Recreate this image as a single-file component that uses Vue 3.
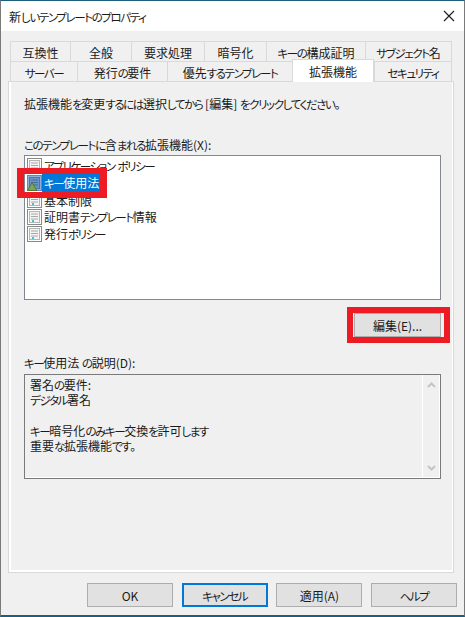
<script setup>
import { h } from 'vue'

// kana in the original UI font is much narrower than in Noto, so kana runs get their own span
const Txt = (props) =>
  props.t.split(/([\u3040-\u30ff]+)/).filter(Boolean).map((s) =>
    /[\u3040-\u30ff]/.test(s) ? h('span', { class: 'kana' }, s) : s
  )
Txt.props = ['t']

const topTabs = [
  { label: '互換性', w: 60 },
  { label: '全般', w: 61 },
  { label: '要求処理', w: 73 },
  { label: '暗号化', w: 62 },
  { label: 'キーの構成証明', w: 99 },
  { label: 'サブジェクト名', w: 87 }
]
const bottomTabs = [
  { label: 'サーバー', w: 67 },
  { label: '発行の要件', w: 90 },
  { label: '優先するテンプレート', w: 125 },
  { label: '拡張機能', w: 82, active: true },
  { label: 'セキュリティ', w: 78 }
]
const extensions = [
  { label: 'アプリケーション ポリシー' },
  { label: 'キー使用法', selected: true },
  { label: '基本制限' },
  { label: '証明書テンプレート情報' },
  { label: '発行ポリシー' }
]
const description = ['署名の要件:', 'デジタル署名', '', 'キー暗号化のみキー交換を許可します', '重要な拡張機能です。']
const footer = ['OK', 'キャンセル', '適用(A)', 'ヘルプ']
</script>

<template>
  <div class="window">
    <div class="titlebar">
      <span class="title"><Txt t="新しいテンプレートのプロパティ" /></span>
      <svg class="close" width="12" height="12" viewBox="0 0 12 12">
        <path d="M1 1 L11 11 M11 1 L1 11" stroke="#1a1a1a" stroke-width="1.1" fill="none" />
      </svg>
    </div>

    <div class="body">
      <div class="tabs">
        <div class="tab-row">
          <div v-for="t in topTabs" :key="t.label" class="tab" :style="{ width: t.w + 'px' }"><span><Txt :t="t.label" /></span></div>
        </div>
        <div class="tab-row">
          <div
            v-for="t in bottomTabs"
            :key="t.label"
            class="tab"
            :class="{ active: t.active }"
            :style="{ width: t.w + 'px' }"
          ><span><Txt :t="t.label" /></span></div>
        </div>
      </div>

      <div class="panel">
        <p class="hint"><Txt t="拡張機能を変更するには選択してから [編集] をクリックしてください。" /></p>
        <p class="label list-label"><Txt t="このテンプレートに含まれる拡張機能(X):" /></p>

        <div class="listbox">
          <div v-for="e in extensions" :key="e.label" class="item" :class="{ selected: e.selected }">
            <svg class="doc" width="15" height="16" viewBox="0 0 15 16">
              <rect x="0.5" y="0.5" width="14" height="15" :fill="e.selected ? '#8fb0d8' : '#fff'" :stroke="e.selected ? '#5f88bb' : '#8a8a8a'" />
              <rect x="2.5" y="2.5" width="10" height="11" :fill="e.selected ? '#6f93c4' : '#f4f4f4'" :stroke="e.selected ? '#4a78a8' : '#b5b5b5'" />
              <path d="M4 5h7M4 7.5h7M4 10h7" :stroke="e.selected ? '#3f6ea3' : '#a8a8a8'" />
              <rect v-if="!e.selected" x="5" y="11" width="2" height="2" fill="#35c6d8" />
              <path v-if="e.selected" d="M5 7.5 L10 15.5 H0.5 Z" fill="#7da44f" stroke="#4d6e30" stroke-width="0.8" />
            </svg>
            <span class="item-text"><Txt :t="e.label" /></span>
          </div>
          <div class="mark mark-list"></div>
        </div>

        <div class="edit-row">
          <button class="btn edit-btn">編集(E)...</button>
          <div class="mark mark-edit"></div>
        </div>

        <p class="label desc-label"><Txt t="キー使用法 の説明(D):" /></p>
        <div class="descbox">
          <div class="desc-text">
            <div v-for="(line, i) in description" :key="i" class="desc-line"><Txt :t="line" /></div>
          </div>
          <div class="scroll">
            <svg width="9" height="6" viewBox="0 0 9 6"><path d="M1 5 L4.5 1.5 L8 5" stroke="#c4c4c4" stroke-width="2" fill="none" /></svg>
            <svg width="9" height="6" viewBox="0 0 9 6"><path d="M1 1 L4.5 4.5 L8 1" stroke="#c4c4c4" stroke-width="2" fill="none" /></svg>
          </div>
        </div>
      </div>

      <div class="footer">
        <button v-for="b in footer" :key="b" class="btn foot-btn" :class="{ primary: b === 'キャンセル' }"><Txt :t="b" /></button>
      </div>
    </div>
  </div>
</template>

<style scoped>
.window {
  width: 465px;
  height: 617px;
  box-sizing: border-box;
  display: flex;
  flex-direction: column;
  background: #f0f0f0;
  border-top: 1px solid #1c5f7c;
  border-bottom: 2px solid #1c5f7c;
  border-left: 1px solid #7a7a7a;
  border-right: 1px solid #7a7a7a;
  font-family: "Noto Sans CJK JP", "Noto Sans", sans-serif;
  font-feature-settings: "palt";
  font-size: 12px;
  color: #1a1a1a;
}
.titlebar {
  height: 30px;
  flex: none;
  background: #fff;
  display: flex;
  align-items: center;
  justify-content: space-between;
  padding: 0 9px 0 8px;
}
.body {
  flex: 1;
  display: flex;
  flex-direction: column;
  padding: 10px 9px 0 7px;
}
.tabs {
  display: flex;
  flex-direction: column;
  padding-left: 2px;
  height: 40px;
  flex: none;
}
.tab-row {
  display: flex;
  height: 20px;
}
.tab {
  box-sizing: border-box;
  height: 21px;
  border: 1px solid #d9d9d9;
  border-right: none;
  border-bottom: none;
  display: flex;
  align-items: center;
  justify-content: center;
  background: #f0f0f0;
}
.tab:last-child {
  border-right: 1px solid #d9d9d9;
}
.tab.active {
  position: relative;
  z-index: 2;
  background: #fff;
  height: 23px;
  margin-top: -2px;
  border-right: 1px solid #d9d9d9;
}
.panel {
  position: relative;
  box-sizing: border-box;
  width: 446px;
  height: 492px;
  background: #f0f0f0;
  border: 1px solid #d9d9d9;
  box-shadow: inset 2px 0 0 #fff, inset -1px -2px 0 #fff;
  padding: 14px 12px 0 15px;
  flex: none;
}
.hint, .label {
  margin: 0;
  line-height: 16px;
  height: 16px;
}
.list-label {
  margin-top: 25px;
}
.listbox {
  position: relative;
  box-sizing: border-box;
  width: 417px;
  height: 145px;
  margin-top: 2px;
  background: #fff;
  border: 1px solid #828790;
  padding: 2px 0 0 2px;
}
.item {
  display: flex;
  align-items: center;
  height: 16.8px;
}
.doc {
  flex: none;
}
.item-text {
  padding: 0 2px;
  line-height: 17px;
}
.item.selected .item-text {
  background: #0078d7;
  color: #fff;
}
.mark {
  position: absolute;
  box-sizing: border-box;
  border: 6px solid #ed1c24;
  pointer-events: none;
}
.mark-list {
  left: -8px;
  top: 12px;
  width: 90px;
  height: 30px;
  border-width: 6px 7px;
}
.edit-row {
  position: relative;
  display: flex;
  justify-content: flex-end;
  height: 24px;
  margin-top: 13px;
}
.btn {
  box-sizing: border-box;
  font: inherit;
  font-feature-settings: inherit;
  color: #1a1a1a;
  background: #e1e1e1;
  border: 1px solid #adadad;
  padding: 0;
  margin: 0;
}
.edit-btn {
  width: 87px;
  height: 24px;
}
.mark-edit {
  right: -9px;
  top: -6px;
  width: 103px;
  height: 36px;
}
.desc-label {
  margin-top: 18px;
}
.descbox {
  box-sizing: border-box;
  display: flex;
  width: 417px;
  height: 105px;
  margin-top: 3px;
  border: 1px solid #7a7a7a;
  box-shadow: inset -1px -1px 0 #fff;
}
.desc-text {
  flex: 1;
  padding: 2px 0 0 5px;
}
.desc-line {
  height: 15.2px;
  line-height: 15px;
}
.scroll {
  box-sizing: border-box;
  width: 18px;
  border-left: 1px solid #fff;
  margin-bottom: 1px;
  display: flex;
  flex-direction: column;
  align-items: center;
  justify-content: space-between;
  padding: 7px 0 6px;
}
.footer {
  display: flex;
  gap: 8.67px;
  justify-content: flex-end;
  margin-top: 10px;
  margin-right: -2px;
}
.foot-btn {
  width: 86px;
  height: 24px;
}
.foot-btn.primary {
  border: 2px solid #0078d7;
}
</style>

<style>
html, body {
  margin: 0;
  background: #f0f0f0;
}
.kana {
  font-size: 11.5px;
  letter-spacing: -1.4px;
}
</style>
